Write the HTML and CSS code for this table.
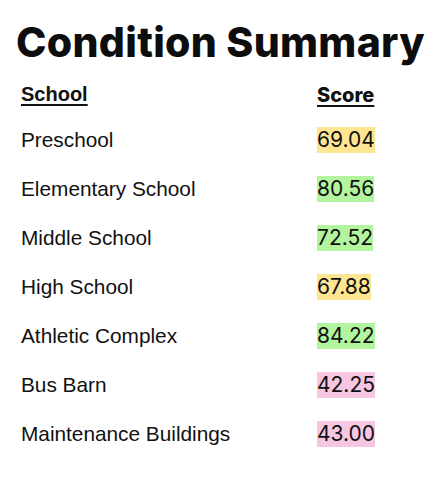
FILE: index.html
```html
<!DOCTYPE html>
<html>
<head>
  <meta charset="UTF-8" />
  <title>Condition Summary</title>
  <link rel="stylesheet" href="styles.css">
</head>
<body>
  <h1 class="title">Condition Summary</h1>
  <div class="summary">
    <div class="head school-head">School</div>
    <div class="head score-head">Score</div>

    <div class="name">Preschool</div>
    <div class="score"><span class="fair">69.04</span></div>

    <div class="name">Elementary School</div>
    <div class="score"><span class="good">80.56</span></div>

    <div class="name">Middle School</div>
    <div class="score"><span class="good">72.52</span></div>

    <div class="name">High School</div>
    <div class="score"><span class="fair">67.88</span></div>

    <div class="name">Athletic Complex</div>
    <div class="score"><span class="good">84.22</span></div>

    <div class="name">Bus Barn</div>
    <div class="score"><span class="poor">42.25</span></div>

    <div class="name">Maintenance Buildings</div>
    <div class="score"><span class="poor">43.00</span></div>
  </div>
</body>
</html>
```

FILE: styles.css
```css
* {
  margin: 0;
  padding: 0;
  box-sizing: border-box;
}
body {
  background: white;
  color: #111;
  padding: 18px 0 0 21px;
}
.title {
  font-family: Inter, sans-serif;
  font-weight: 800;
  font-size: 41px;
  line-height: 48px;
  letter-spacing: 0.3px;
  margin-left: -5px;
  color: #0d0d0d;
}
.summary {
  display: grid;
  grid-template-columns: 296px auto;
  grid-auto-rows: 49px;
  align-items: center;
}
.head {
  font-weight: bold;
  font-size: 20px;
  text-decoration: underline;
  text-underline-offset: 3px;
  text-decoration-thickness: 2px;
  align-self: start;
  padding-top: 17px;
}
.school-head {
  font-family: "Liberation Sans", Arial, sans-serif;
}
.score-head {
  font-family: Inter, sans-serif;
  font-weight: 800;
}
.name {
  font-family: "Liberation Sans", Arial, sans-serif;
  font-size: 20.8px;
}
.score {
  font-family: Inter, sans-serif;
  font-size: 21px;
}
.score span {
  line-height: 26px;
  display: inline-block;
}
.fair {
  background: #fee591;
}
.good {
  background: #b3f59f;
}
.poor {
  background: #f7c6e2;
}
```
